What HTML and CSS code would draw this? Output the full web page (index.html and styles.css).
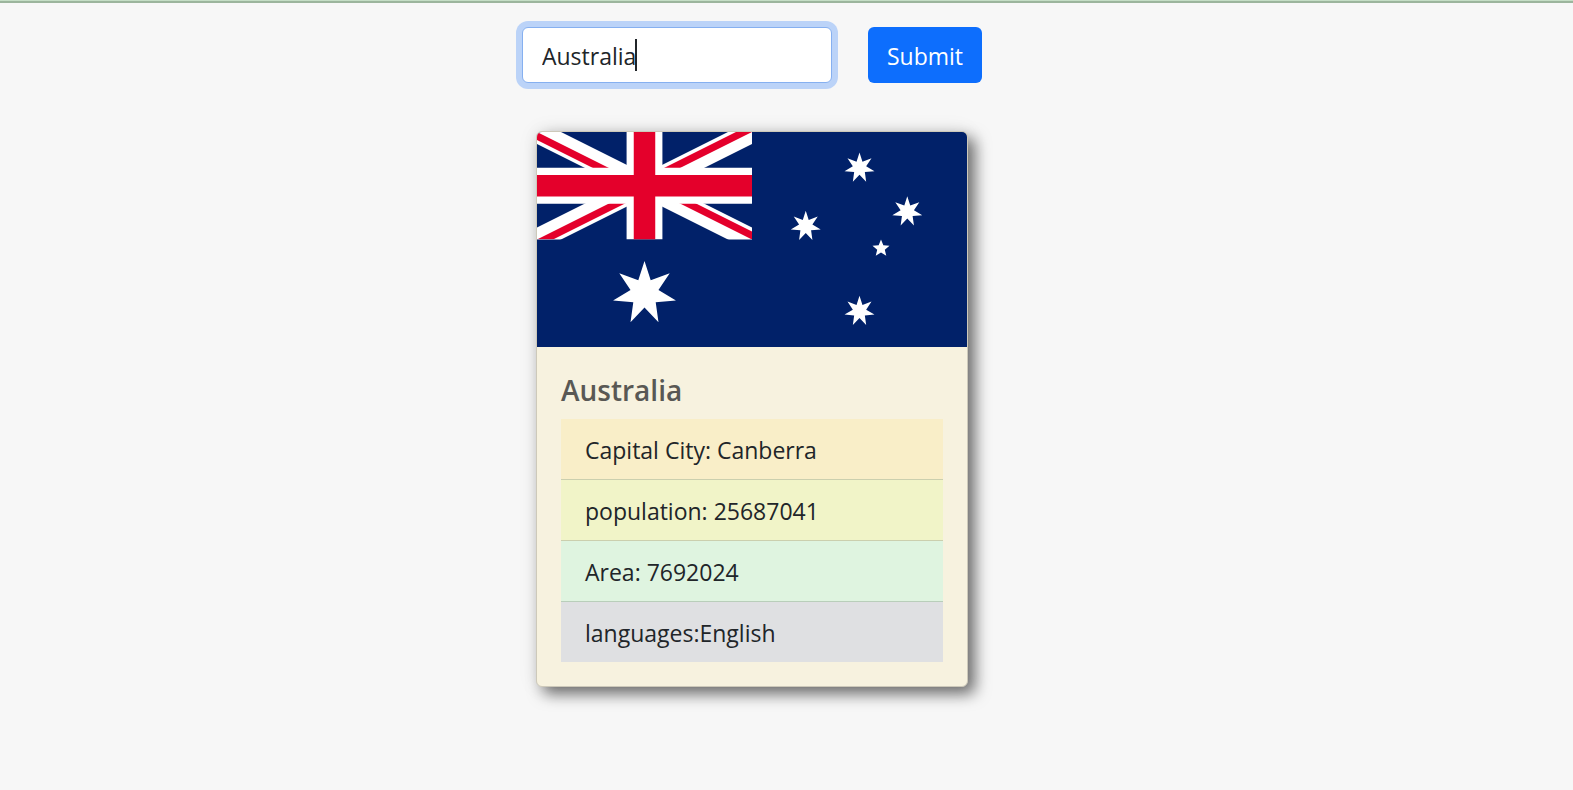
FILE: index.html
```html
<!DOCTYPE html>
<html lang="en">
<head>
<meta charset="utf-8">
<title>Country search</title>
<link rel="stylesheet" href="styles.css">
</head>
<body>
<main class="page">
  <form class="search">
    <div class="search-field">
      <input class="search-input" type="text" value="Australia" aria-label="Country name">
      <span class="caret"></span>
    </div>
    <button class="search-button" type="button">Submit</button>
  </form>
  <article class="card">
    <svg class="flag" viewBox="0 0 430 215" role="img" aria-label="Flag of Australia">
      <defs>
        <clipPath id="canton"><path d="M0 0h60v30H0z"/></clipPath>
        <clipPath id="saltire"><path d="M30 15h30v15zv15H0zH0V0zV0h30z"/></clipPath>
        <path id="star7" d="M0-100 19.28-40.04 78.18-62.35 43.33-9.89 97.49 22.25 34.75 27.71 43.39 90.1 0 44.44-43.39 90.1-34.75 27.71-97.49 22.25-43.33-9.89-78.18-62.35-19.28-40.04z"/>
        <path id="star5" d="M0-100 26.12-35.95 95.11-30.9 42.26 13.73 58.78 80.9 0 44.44-58.78 80.9-42.26 13.73-95.11-30.9-26.12-35.95z"/>
      </defs>
      <path fill="#012169" d="M0 0h430v215H0z"/>
      <g transform="scale(3.5833)" clip-path="url(#canton)">
        <path d="M0 0l60 30M60 0L0 30" stroke="#fff" stroke-width="6"/>
        <path d="M0 0l60 30M60 0L0 30" stroke="#e4002b" stroke-width="4" clip-path="url(#saltire)"/>
        <path d="M30 0v30M0 15h60" stroke="#fff" stroke-width="10"/>
        <path d="M30 0v30M0 15h60" stroke="#e4002b" stroke-width="6"/>
      </g>
      <g fill="#fff">
        <use href="#star7" transform="translate(107.5 161.25) scale(.3225)"/>
        <use href="#star7" transform="translate(322.5 35.83) scale(.1536)"/>
        <use href="#star7" transform="translate(268.75 94.06) scale(.1536)"/>
        <use href="#star7" transform="translate(370.28 79.73) scale(.1536)"/>
        <use href="#star7" transform="translate(322.5 179.17) scale(.1536)"/>
        <use href="#star5" transform="translate(344 116.46) scale(.0896)"/>
      </g>
    </svg>
    <div class="card-body">
      <h5 class="card-title">Australia</h5>
      <ul class="facts">
        <li class="fact fact-capital">Capital City: Canberra</li>
        <li class="fact fact-population">population: 25687041</li>
        <li class="fact fact-area">Area: 7692024</li>
        <li class="fact fact-languages">languages:English</li>
      </ul>
    </div>
  </article>
</main>
</body>
</html>
```
FILE: styles.css
```css
* {
  box-sizing: border-box;
}

body {
  margin: 0;
  background: #f7f7f7;
  color: #212529;
  font-family: "Open Sans", "Noto Sans", sans-serif;
  font-size: 23px;
  line-height: 36px;
  border-top: 1px solid #c5dec6;
}

.page {
  display: flex;
  flex-direction: column;
  align-items: center;
  gap: 48px;
  padding: 24px 69px 48px 0;
  border-top: 2px solid #9cb59d;
}

.search {
  display: flex;
  gap: 36px;
}

.search-field {
  position: relative;
}

.search-input {
  display: block;
  width: 310px;
  height: 56px;
  padding: 10px 19px 8px;
  font: inherit;
  color: inherit;
  background: #fff;
  border: 1px solid #86b0f0;
  border-radius: 6px;
  outline: 0;
  box-shadow: 0 0 0 6px #bbd3f8;
}

.caret {
  position: absolute;
  top: 12px;
  left: 113px;
  width: 2px;
  height: 32px;
  background: #212529;
}

.search-button {
  height: 56px;
  min-width: 114px;
  padding: 11px 19px 9px;
  font: inherit;
  color: #fff;
  background: #0d6efd;
  border: 0;
  border-radius: 6px;
}

.card {
  width: 432px;
  max-width: 100%;
  overflow: hidden;
  background: #f7f2df;
  border: 1px solid #cdc9ba;
  border-radius: 6px;
  box-shadow: 7px 7px 15px rgba(0, 0, 0, 0.55), 0 0 20px rgba(0, 0, 0, 0.08);
}

.flag {
  display: block;
  width: 100%;
}

.card-body {
  padding: 25px 24px 24px;
}

.card-title {
  margin: 0 0 11px;
  font-size: 28px;
  font-weight: 600;
  color: #595854;
}

.facts {
  margin: 0;
  padding: 0;
  list-style: none;
}

.fact {
  padding: 13px 24px 11px;
  border-bottom: 1px solid #cbcfae;
}

.fact-capital {
  background: #f9eec8;
}

.fact-population {
  background: #f1f4c8;
}

.fact-area {
  background: #dff4e0;
  border-color: #b9ceba;
}

.fact-languages {
  background: #dfe0e2;
  border-bottom: 0;
}
```
